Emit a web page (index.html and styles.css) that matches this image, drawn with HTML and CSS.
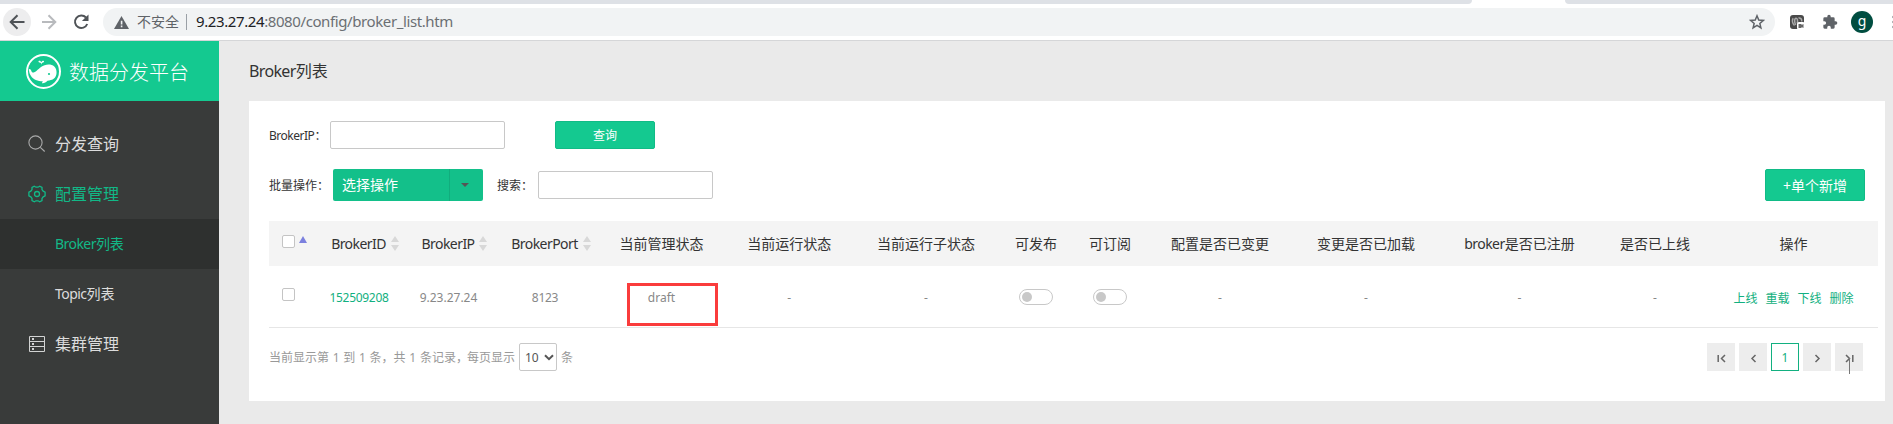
FILE: index.html
```html
<!DOCTYPE html>
<html lang="zh-CN">
<head>
<meta charset="utf-8">
<title>Broker列表</title>
<link rel="stylesheet" href="styles.css">
</head>
<body>
<header class="browser">
  <div class="tabs"><i class="tabs-left"></i><i class="tabs-right"></i></div>
  <div class="toolbar">
    <span class="nav nav-back"><svg width="16" height="16" viewBox="0 0 16 16" fill="none" stroke="#4f5357" stroke-width="2"><path d="M15.500 8H2M8.500 1.200L1.700 8l6.800 6.800"/></svg></span>
    <span class="nav"><svg width="16" height="16" viewBox="0 0 16 16" fill="none" stroke="#b8babd" stroke-width="2"><path d="M1 8h13M7.500 1.200L14.300 8l-6.800 6.800"/></svg></span>
    <span class="nav"><svg width="16" height="16" viewBox="0 0 16 16"><path d="M13 3.500A6.300 6.300 0 1 0 14.200 10" fill="none" stroke="#4f5357" stroke-width="2"/><path d="M15.500 .5v6.600H8.900z" fill="#4f5357"/></svg></span>
    <div class="omnibox">
      <svg class="warn" width="15" height="13" viewBox="0 0 15 13"><path d="M7.500 0L15 13H0z" fill="#5f6368"/><path d="M6.800 4.800h1.600v3.600H6.800zM6.800 9.600h1.600v1.600H6.800z" fill="#f1f3f4"/></svg>
      <span class="insecure">不安全</span>
      <span class="url"><b>9.23.27.24</b>:8080/config/broker_list.htm</span>
      <svg class="star" width="16" height="16" viewBox="0 0 16 16"><path d="M8 1.800l1.750 4.200 4.550.4-3.450 3 1.050 4.450L8 11.450l-3.900 2.400L5.150 9.400 1.700 6.400l4.550-.4z" fill="none" stroke="#5f6368" stroke-width="1.500"/></svg>
    </div>
    <div class="extensions">
      <svg width="15" height="15" viewBox="0 0 15 15"><rect width="14" height="14" rx="3" fill="#4a4a4a"/><path d="M3.200 3.200c-1.500 2-.8 5.500 1.300 7.300M5.800 9.800C4 7 4.500 3.200 6 3.200S8 6 7.200 8.500M8.500 3c2-.5 3.500 1 3.200 3.500" fill="none" stroke="#aaa" stroke-width="1.500"/><rect x="7" y="7" width="8" height="8" rx="2" fill="#fff"/><path d="M8.500 9h3v1l2-1v4l-2-1v1h-3z" fill="#666"/></svg>
      <svg width="16" height="16" viewBox="0 0 24 24" fill="#5f6368"><path d="M20.500 11H19V7a2 2 0 0 0-2-2h-4V3.500a2.500 2.500 0 0 0-5 0V5H4a2 2 0 0 0-2 2v3.800h1.500a2.700 2.700 0 0 1 0 5.400H2V20a2 2 0 0 0 2 2h3.800v-1.500a2.700 2.700 0 0 1 5.400 0V22H17a2 2 0 0 0 2-2v-4h1.500a2.500 2.500 0 0 0 0-5z"/></svg>
      <span class="avatar">g</span>
      <svg class="more" width="4" height="16" viewBox="0 0 4 16" fill="#5f6368"><circle cx="2" cy="3" r="1.600"/><circle cx="2" cy="8" r="1.600"/><circle cx="2" cy="13" r="1.600"/></svg>
    </div>
  </div>
</header>
<div class="app">
  <aside class="sidebar">
    <div class="brand">
      <svg width="35" height="35" viewBox="0 0 35 35"><circle cx="17.500" cy="17.500" r="16.500" fill="none" stroke="#fff" stroke-width="2"/><path d="M3 16.500C2.600 15 3.600 14.300 4.600 15.500C5.400 16.500 5.500 18.200 6.500 18.600C9.500 18.800 11.500 15.500 15 13C19 10 25 9.500 28.300 12.500C31.500 15.500 31.300 22 28 24.600C26.500 26 23.500 26.600 21.500 26.800C20 28.500 18 29.600 16 29.300C16 28.500 16.600 27.900 16.800 27.300C12 27.300 7 25.500 5 22C3.700 20 3.200 18.300 3 16.500z" fill="#fff"/><path d="M15.300 11C15.500 9.300 15 8.500 13.500 8.400C12.600 8.300 12.200 7.500 12.700 6.900C13.700 6.300 14.900 7 15.300 8.300C15.700 7 17 6.400 17.800 7C18.400 7.600 17.900 8.400 17 8.500C15.900 8.700 15.700 9.600 15.300 11z" fill="#fff"/><circle cx="23" cy="20" r="1.100" fill="#14c990"/></svg>
      <span>数据分发平台</span>
    </div>
    <nav class="menu">
      <a class="item"><svg width="18" height="18" viewBox="0 0 18 18" fill="none" stroke="#a9aaaa" stroke-width="1.100"><circle cx="7.500" cy="7.500" r="6.600"/><path d="M12.300 12.300l4.400 4.200"/></svg><span>分发查询</span></a>
      <a class="item on"><svg width="18" height="18" viewBox="0 0 18 18" fill="none" stroke="#12b887" stroke-width="1.300"><path d="M6.300 1.200L8 2.200h2l1.700-1L14 2.500v2l1.200 1.700 1.900 1v3.600l-1.900 1L14 13.500v2l-2.300 1.300-1.700-1H8l-1.700 1L4 15.500v-2l-1.200-1.700-1.900-1V7.200l1.900-1L4 4.500v-2z"/><circle cx="9" cy="9" r="2.500"/></svg><span>配置管理</span></a>
      <a class="sub active"><span><span class="lat">Broker</span>列表</span></a>
      <a class="sub"><span><span class="lat">Topic</span>列表</span></a>
      <a class="item"><svg width="18" height="18" viewBox="0 0 18 18" fill="none" stroke="#d2d3d3" stroke-width="1"><path d="M1.500 1.500h15v15h-15zM1.500 6.500h15M1.500 11.500h15"/><path d="M4 4h2M4 9h2M4 14h2" stroke-width="2"/></svg><span>集群管理</span></a>
    </nav>
  </aside>
  <main class="main">
    <h1 class="title"><span class="lat">Broker</span>列表</h1>
    <section class="card">
      <div class="row query">
        <label class="lb"><span class="lat">BrokerIP</span>：</label><input class="field" type="text"><button class="btn search">查询</button>
      </div>
      <div class="row batch">
        <label class="lb">批量操作：</label>
        <div class="dropdown"><span>选择操作</span><i></i></div>
        <label class="lb find">搜索：</label><input class="field" type="text">
        <button class="btn add">+单个新增</button>
      </div>
      <div class="table">
        <div class="tr head">
          <div class="check"><i class="box"></i><i class="asc"></i></div>
          <div class="sortable"><span class="lat">BrokerID</span><i class="sort"></i></div>
          <div class="sortable"><span class="lat">BrokerIP</span><i class="sort"></i></div>
          <div class="sortable"><span class="lat">BrokerPort</span><i class="sort"></i></div>
          <div>当前管理状态</div><div>当前运行状态</div><div>当前运行子状态</div><div>可发布</div><div>可订阅</div>
          <div>配置是否已变更</div><div>变更是否已加载</div><div><span class="lat">broker</span>是否已注册</div><div>是否已上线</div><div>操作</div>
        </div>
        <div class="tr body">
          <div class="check"><i class="box"></i></div>
          <div class="link"><span class="num">152509208</span></div><div>9.23.27.24</div><div><span class="num">8123</span></div>
          <div class="status">draft<i class="mark"></i></div><div>-</div><div>-</div>
          <div><i class="toggle"></i></div><div><i class="toggle"></i></div>
          <div>-</div><div>-</div><div>-</div><div>-</div>
          <div class="ops"><a>上线</a><a>重载</a><a>下线</a><a>删除</a></div>
        </div>
      </div>
      <div class="foot">
        <span class="info">当前显示第 1 到 1 条，共 1 条记录，</span><span class="per">每页显示</span>
        <span class="size">10<svg width="10" height="7" viewBox="0 0 10 7" fill="none" stroke="#555" stroke-width="2"><path d="M1 1.200l4 4 4-4"/></svg></span><span class="unit">条</span>
        <div class="pager">
          <a><svg width="9" height="9" viewBox="0 0 9 9" fill="none" stroke="#666" stroke-width="1.500"><path d="M1.200 1v7M8 1L4.500 4.500 8 8"/></svg></a>
          <a><svg width="9" height="9" viewBox="0 0 9 9" fill="none" stroke="#666" stroke-width="1.500"><path d="M6.500 1L3 4.500 6.500 8"/></svg></a>
          <a class="current">1</a>
          <a><svg width="9" height="9" viewBox="0 0 9 9" fill="none" stroke="#666" stroke-width="1.500"><path d="M2.500 1L6 4.500 2.500 8"/></svg></a>
          <a class="last"><svg width="9" height="9" viewBox="0 0 9 9" fill="none" stroke="#666" stroke-width="1.500"><path d="M1 1l3.500 3.500L1 8M7.800 1v7"/></svg><i class="cursor"></i></a>
        </div>
      </div>
    </section>
  </main>
</div>
</body>
</html>
```

FILE: styles.css
```css
* { box-sizing: border-box; }
body { margin: 0; height: 424px; overflow: hidden; background: #eaeaea; font-family: "Noto Sans", "Noto Sans CJK SC", sans-serif; font-size: 12px; color: #333; }
svg { display: block; flex: none; }
i { font-style: normal; }
.lat { letter-spacing: -0.04em; }
.num { letter-spacing: -0.3px; }

.browser { height: 41px; background: #fff; border-bottom: 1px solid #d5d6d8; }
.tabs { height: 4px; display: flex; justify-content: space-between; }
.tabs-left { width: 1472px; background: #dee1e6; border-bottom-right-radius: 6px; }
.tabs-right { width: 328px; background: #dee1e6; border-bottom-left-radius: 6px; }
.toolbar { height: 36px; padding-left: 3px; display: flex; align-items: center; }
.nav { width: 28px; height: 28px; margin-right: 4px; border-radius: 50%; display: flex; align-items: center; justify-content: center; flex: none; }
.nav-back { background: #ededee; }
.omnibox { width: 1672px; height: 28px; margin-left: 4px; padding: 0 10px 0 11px; border-radius: 14px; background: #f1f3f4; display: flex; align-items: center; flex: none; }
.insecure { margin-left: 8px; font-size: 14px; color: #5f6368; padding-right: 7px; border-right: 1px solid #9aa0a6; line-height: 16px; }
.url { margin-left: 9px; flex: 1; font-size: 15px; letter-spacing: -0.4px; line-height: 20px; padding-bottom: 2px; color: #6b6f73; }
.url b { font-weight: 400; color: #202124; }
.extensions { display: flex; align-items: center; flex: 1; min-width: 0; margin-left: 15px; }
.extensions svg + svg { margin-left: 17px; }
.avatar { width: 22px; height: 22px; margin: 0 19px 0 13px; border-radius: 50%; background: #004d40; color: #fff; font-size: 14px; line-height: 20px; text-align: center; flex: none; }

.app { display: flex; height: 383px; }
.sidebar { width: 219px; background: #393b3a; flex: none; }
.brand { height: 60px; padding-left: 26px; background: #14c990; display: flex; align-items: center; color: #fff; font-size: 20px; font-weight: 300; }
.brand span { margin-left: 8px; }
.menu { padding-top: 18px; display: flex; flex-direction: column; }
.item, .sub { height: 50px; display: flex; align-items: center; color: #dcdcdc; }
.item { padding-left: 28px; font-size: 16px; }
.item svg { margin-right: 9px; }
.item > span, .sub > span { padding-bottom: 2px; }
.sub { padding-left: 55px; font-size: 14px; }
.item.on, .sub.active { color: #12b887; }
.sub.active { background: #2e302f; }

.main { flex: 1; min-width: 0; padding-right: 8px; padding-left: 30px; }
.title { height: 60px; margin: 0; font-size: 16px; font-weight: 400; line-height: 61px; }
.card { height: 300px; background: #fff; padding: 20px 7px 0 20px; }
.row { display: flex; align-items: center; padding-right: 13px; }
.query { height: 28px; }
.batch { height: 32px; margin-top: 20px; }
.lb { width: 61px; white-space: nowrap; }
.batch .lb { width: 64px; }
.batch .find { width: 41px; margin-left: 14px; }
.field { width: 175px; height: 28px; border: 1px solid #c8c8c8; border-radius: 2px; background: #fff; }
.btn { width: 100px; height: 28px; padding: 0; border: 1px solid #11bb86; border-radius: 2px; background: #14c990; color: #fff; font: inherit; }
.search { margin-left: 50px; }
.add { height: 32px; margin-left: auto; font-size: 14px; }
.dropdown { width: 150px; height: 32px; border-radius: 2px; background: #13c08a; color: #fff; display: flex; align-items: center; font-size: 14px; }
.dropdown span { width: 117px; height: 32px; padding-left: 9px; line-height: 31px; border-right: 1px solid #11ad7d; }
.dropdown i { margin-left: 11px; border: 4px solid transparent; border-top-color: #555; border-bottom: 0; }

.table { width: 1609px; margin-top: 20px; }
.tr { display: grid; grid-template-columns: 43.5px 93px 86px 107px 126px 129.5px 144px 76px 72px 148px 144px 163px 108px 169px; }
.tr > div { display: flex; align-items: center; justify-content: center; white-space: nowrap; }
.head { height: 45px; background: #f4f4f4; font-size: 14px; }
.head > div { padding-bottom: 1px; }
.body { height: 62px; border-bottom: 1px solid #e6e6e6; color: #888; }
.body > div { padding-top: 2px; }
.tr .check { align-items: flex-start; justify-content: flex-start; padding: 14px 0 0 13px; }
.body .check { padding-top: 22px; }
.box { width: 13px; height: 13px; border: 1px solid #c4c4c4; border-radius: 2px; background: #fff; }
.asc { margin: 1px 0 0 4px; border: 4.500px solid transparent; border-top: 0; border-bottom: 7px solid #7b80de; }
.tr .sortable { padding-left: 12px; }
.sort { width: 8px; height: 15px; margin-left: 5px; display: flex; flex-direction: column; justify-content: space-between; }
.sort::before, .sort::after { content: ""; border: 4px solid transparent; }
.sort::before { border-top: 0; border-bottom: 6px solid #d8d8d8; }
.sort::after { border-bottom: 0; border-top: 6px solid #d8d8d8; }
.link, .ops { color: #12b080; }
.status { position: relative; }
.mark { position: absolute; left: 28.5px; top: 17px; width: 91px; height: 43px; border: 3px solid #fa3c3c; }
.toggle { width: 34px; height: 16px; padding: 2px; border: 1px solid #c8c8c8; border-radius: 8px; margin-bottom: 1px; }
.toggle::before { content: ""; display: block; width: 10px; height: 10px; border-radius: 50%; background: #c8c8c8; }
.ops { gap: 8px; }

.foot { height: 28px; margin-top: 15px; display: flex; align-items: center; color: #999; }
.info { width: 198px; white-space: nowrap; word-spacing: 0.6px; }
.per { width: 52px; }
.size { width: 38px; height: 28px; padding-left: 5px; border: 1px solid #c8c8c8; border-radius: 2px; display: flex; align-items: center; gap: 5px; color: #555; }
.unit { margin-left: 4px; }
.pager { margin-left: auto; margin-right: 15px; display: flex; gap: 4px; }
.pager a { width: 28px; height: 28px; background: #ededed; display: flex; align-items: center; justify-content: center; padding-top: 2px; }
.pager .current { border: 1px solid #12b080; background: #fff; color: #12b080; padding: 0; }
.last { position: relative; }
.cursor { position: absolute; left: 14px; top: 15px; width: 1px; height: 16px; background: #777; }
```
